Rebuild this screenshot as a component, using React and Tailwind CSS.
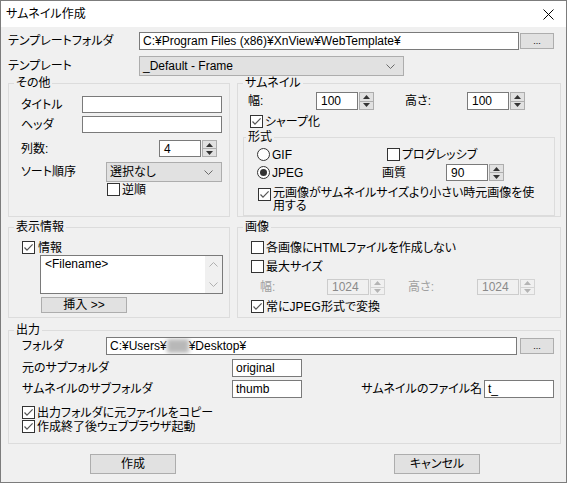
import React from "react";

function Check({ checked }) {
  return (
    <span className="inline-flex h-[13px] w-[13px] shrink-0 items-center justify-center border border-[#333] bg-white">
      {checked && (
        <svg width="11" height="11" viewBox="0 0 11 11">
          <path d="M1.5 5.5 4 8.2 9.6 2.4" fill="none" stroke="#555" strokeWidth="1.2" />
        </svg>
      )}
    </span>
  );
}

function Radio({ checked }) {
  return (
    <svg width="13" height="13" viewBox="0 0 13 13" className="shrink-0">
      <circle cx="6.5" cy="6.5" r="6" fill="white" stroke="#333" />
      {checked && <circle cx="6.5" cy="6.5" r="3.5" fill="#333" />}
    </svg>
  );
}

function Spin({ disabled }) {
  const c = disabled ? "#b4b4b4" : "#333";
  const box = disabled ? "border-[#d4d4d4] bg-[#f0f0f0]" : "border-[#adadad] bg-[#e1e1e1]";
  return (
    <div className="ml-[1px] flex h-full w-[15px] flex-col">
      <div className={`flex flex-1 items-center justify-center border ${box}`}>
        <svg width="7" height="4" viewBox="0 0 7 4">
          <path d="M0 4 3.5 0 7 4Z" fill={c} />
        </svg>
      </div>
      <div className={`flex flex-1 items-center justify-center border border-t-0 ${box}`}>
        <svg width="7" height="4" viewBox="0 0 7 4">
          <path d="M0 0 3.5 4 7 0Z" fill={c} />
        </svg>
      </div>
    </div>
  );
}

function Num({ value, disabled }) {
  return (
    <>
      <div
        className={`flex h-full w-[42px] items-center pl-[4px] ${
          disabled ? "border border-[#cccccc] bg-[#f0f0f0] text-[#8a8a8a]" : "border border-[#7a7a7a] bg-white"
        }`}
      >
        {value}
      </div>
      <Spin disabled={disabled} />
    </>
  );
}

function Field({ className = "", children }) {
  return (
    <div className={`flex h-full items-center overflow-hidden whitespace-nowrap border border-[#7a7a7a] bg-white pl-[3px] ${className}`}>
      {children}
    </div>
  );
}

function Combo({ className = "", children }) {
  return (
    <div className={`flex h-full items-center border border-[#adadad] bg-[#e1e1e1] pl-[3px] pr-[8px] ${className}`}>
      <span className="flex-1">{children}</span>
      <svg width="9" height="5" viewBox="0 0 9 5">
        <path d="M0.5 0.5 4.5 4.5 8.5 0.5" fill="none" stroke="#6a6a6a" />
      </svg>
    </div>
  );
}

function Button({ className = "", children }) {
  return (
    <div className={`flex items-center justify-center border border-[#adadad] bg-[#e1e1e1] ${className}`}>
      {children}
    </div>
  );
}

function Group({ title, className = "", children, legendClass = "ml-[5px]" }) {
  return (
    <fieldset className={`min-w-0 border border-[#dcdcdc] ${className}`}>
      <legend className={`px-[2px] leading-[14px] ${legendClass}`}>{title}</legend>
      {children}
    </fieldset>
  );
}

export default function App() {
  return (
    <div className="flex h-[483px] w-[567px] flex-col border border-[#7c7c7c] bg-[#f0f0f0] font-['Liberation_Sans','Noto_Sans_CJK_JP',sans-serif] text-[12px] leading-[14px] text-black [font-feature-settings:'palt']">
      <div className="flex h-[26px] shrink-0 items-center bg-white pl-[5px]">
        <span>サムネイル作成</span>
        <svg width="11" height="11" viewBox="0 0 11 11" className="ml-auto mr-[12px]">
          <path d="M0.5 0.5 10.5 10.5M10.5 0.5 0.5 10.5" stroke="#000" strokeWidth="1" />
        </svg>
      </div>

      <div className="flex flex-col pl-[7px]">
        <div className="mt-[5px] flex h-[18px] items-center">
          <span className="w-[131px]">テンプレートフォルダ</span>
          <Field className="w-[380px]">C:¥Program Files (x86)¥XnView¥WebTemplate¥</Field>
          <Button className="ml-[1px] h-[16px] w-[34px] text-[9px]">...</Button>
        </div>
        <div className="mt-[6px] flex h-[20px] items-center">
          <span className="w-[131px]">テンプレート</span>
          <Combo className="w-[265px]">_Default - Frame</Combo>
        </div>

        <div className="flex gap-[7px]">
          <Group title="その他" className="h-[141px] w-[222px]">
            <div className="ml-[12px] mt-[6px] flex h-[17px] items-center">
              <span className="w-[61px]">タイトル</span>
              <Field className="w-[140px]" />
            </div>
            <div className="ml-[12px] mt-[3px] flex h-[17px] items-center">
              <span className="w-[61px]">ヘッダ</span>
              <Field className="w-[140px]" />
            </div>
            <div className="ml-[12px] mt-[7px] flex h-[17px] items-center">
              <span className="w-[138px]">列数:</span>
              <Num value="4" />
            </div>
            <div className="ml-[12px] mt-[5px] flex h-[20px] items-center">
              <span className="w-[85px]">ソート順序</span>
              <Combo className="w-[116px]">選択なし</Combo>
            </div>
            <div className="ml-[98px] mt-[1px] flex h-[13px] items-center gap-[2px]">
              <Check />
              <span>逆順</span>
            </div>
          </Group>

          <Group title="サムネイル" className="h-[141px] w-[324px]">
            <div className="ml-[10px] mt-[2px] flex h-[18px] items-center">
              <span className="w-[68px]">幅:</span>
              <Num value="100" />
              <span className="ml-[31px] w-[62px]">高さ:</span>
              <Num value="100" />
            </div>
            <div className="ml-[12px] mt-[5px] flex h-[13px] items-center gap-[2px]">
              <Check checked />
              <span>シャープ化</span>
            </div>
            <Group title="形式" className="ml-[5px] mt-[2px] h-[86px] w-[312px]" legendClass="ml-[2px]">
              <div className="ml-[13px] mt-[4px] flex h-[13px] items-center">
                <span className="flex w-[130px] items-center gap-[2px]">
                  <Radio />
                  <span>GIF</span>
                </span>
                <Check />
                <span className="ml-[2px]">プログレッシブ</span>
              </div>
              <div className="ml-[13px] mt-[3px] flex h-[17px] items-center">
                <span className="flex w-[125px] items-center gap-[2px]">
                  <Radio checked />
                  <span>JPEG</span>
                </span>
                <span className="w-[64px]">画質</span>
                <Num value="90" />
              </div>
              <div className="ml-[14px] mt-[6px] flex items-start gap-[2px]">
                <span className="mt-[1px]">
                  <Check checked />
                </span>
                <span className="leading-[13px]">
                  元画像がサムネイルサイズより小さい時元画像を使
                  <br />
                  用する
                </span>
              </div>
            </Group>
          </Group>
        </div>

        <div className="mt-[3px] flex gap-[7px]">
          <Group title="表示情報" className="h-[98px] w-[222px]">
            <div className="ml-[13px] mt-[7px] flex h-[13px] items-center gap-[3px]">
              <Check checked />
              <span>情報</span>
            </div>
            <div className="ml-[31px] mt-[1px] flex h-[39px] w-[183px] border border-[#7a7a7a] bg-white">
              <span className="flex-1 pl-[4px] pt-[1px]">&lt;Filename&gt;</span>
              <div className="flex w-[17px] flex-col items-center justify-between bg-[#f0f0f0] py-[6px]">
                <svg width="9" height="5" viewBox="0 0 9 5">
                  <path d="M0.5 4.5 4.5 0.5 8.5 4.5" fill="none" stroke="#b0b0b0" />
                </svg>
                <svg width="9" height="5" viewBox="0 0 9 5">
                  <path d="M0.5 0.5 4.5 4.5 8.5 0.5" fill="none" stroke="#b0b0b0" />
                </svg>
              </div>
            </div>
            <Button className="ml-[32px] mt-[3px] h-[16px] w-[86px]">挿入 &gt;&gt;</Button>
          </Group>

          <Group title="画像" className="h-[98px] w-[324px]">
            <div className="ml-[13px] mt-[7px] flex h-[13px] items-center gap-[2px]">
              <Check />
              <span>各画像にHTMLファイルを作成しない</span>
            </div>
            <div className="ml-[13px] mt-[6px] flex h-[13px] items-center gap-[2px]">
              <Check />
              <span>最大サイズ</span>
            </div>
            <div className="ml-[22px] mt-[6px] flex h-[16px] items-center text-[#a0a0a0]">
              <span className="w-[67px]">幅:</span>
              <Num value="1024" disabled />
              <span className="ml-[23px] w-[69px]">高さ:</span>
              <Num value="1024" disabled />
            </div>
            <div className="ml-[13px] mt-[5px] flex h-[13px] items-center gap-[2px]">
              <Check checked />
              <span>常にJPEG形式で変換</span>
            </div>
          </Group>
        </div>

        <Group title="出力" className="mt-[5px] h-[121px] w-[553px]">
          <div className="ml-[13px] flex h-[18px] items-center">
            <span className="w-[84px]">フォルダ</span>
            <Field className="w-[411px]">
              C:¥Users¥
              <span className="inline-block h-[14px] w-[22px] bg-[#b8b8b8] blur-[2px]" />
              ¥Desktop¥
            </Field>
            <Button className="ml-[3px] h-[16px] w-[34px] text-[9px]">...</Button>
          </div>
          <div className="ml-[13px] mt-[4px] flex h-[18px] items-center">
            <span className="w-[210px]">元のサブフォルダ</span>
            <Field className="w-[70px]">original</Field>
          </div>
          <div className="ml-[13px] mr-[6px] mt-[3px] flex h-[18px] items-center">
            <span className="w-[210px]">サムネイルのサブフォルダ</span>
            <Field className="w-[70px]">thumb</Field>
            <span className="flex-1 pr-[2px] text-right">サムネイルのファイル名</span>
            <Field className="w-[70px]">t_</Field>
          </div>
          <div className="ml-[13px] mt-[8px] flex h-[13px] items-center gap-[2px]">
            <Check checked />
            <span>出力フォルダに元ファイルをコピー</span>
          </div>
          <div className="ml-[13px] mt-[1px] flex h-[13px] items-center gap-[2px]">
            <Check checked />
            <span>作成終了後ウェブブラウザ起動</span>
          </div>
        </Group>

        <div className="mt-[10px] flex h-[20px]">
          <Button className="ml-[82px] w-[86px]">作成</Button>
          <Button className="ml-[218px] w-[86px]">キャンセル</Button>
        </div>
      </div>
    </div>
  );
}
